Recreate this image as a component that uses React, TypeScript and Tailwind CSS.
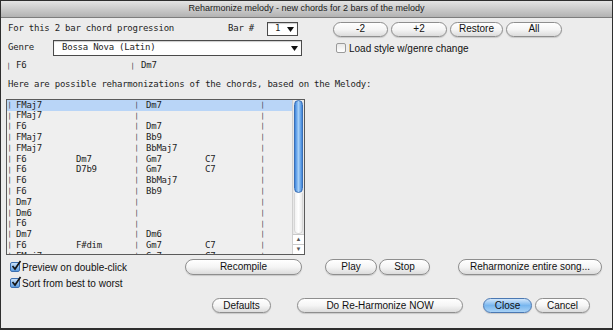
const mono = "font-['DejaVu_Sans_Mono',monospace] text-[9px] tracking-[-0.23px] text-[#1e1e1e]";
const sans = "font-['Liberation_Sans',Arial,sans-serif]";

const rows: [string, string, string, string][] = [
  ['FMaj7', '', 'Dm7', ''],
  ['FMaj7', '', '', ''],
  ['F6', '', 'Dm7', ''],
  ['FMaj7', '', 'Bb9', ''],
  ['FMaj7', '', 'BbMaj7', ''],
  ['F6', 'Dm7', 'Gm7', 'C7'],
  ['F6', 'D7b9', 'Gm7', 'C7'],
  ['F6', '', 'BbMaj7', ''],
  ['F6', '', 'Bb9', ''],
  ['Dm7', '', '', ''],
  ['Dm6', '', '', ''],
  ['F6', '', '', ''],
  ['Dm7', '', 'Dm6', ''],
  ['F6', 'F#dim', 'Gm7', 'C7'],
  ['FMaj7', '', 'Gm7', 'C7'],
];

function Bar() {
  return (
    <span className="w-[5px] shrink-0 text-center font-['DejaVu_Sans_Mono',monospace] text-[7px] leading-none text-[#3a3a3a]">
      |
    </span>
  );
}

function Button({
  label,
  className = '',
  primary = false,
}: {
  label: string;
  className?: string;
  primary?: boolean;
}) {
  return (
    <div
      className={`flex items-center justify-center shrink-0 rounded-full border text-[10px] leading-none text-[#111] ${sans} ${
        primary
          ? 'border-[#4b78b2] bg-gradient-to-b from-[#d2e7fb] via-[#78b6ee] to-[#a8d2f6]'
          : 'border-[#8e8e8e] bg-gradient-to-b from-white via-[#f5f5f5] to-[#dcdcdc]'
      } shadow-[0_1px_1px_rgba(0,0,0,0.15)] ${className}`}
    >
      {label}
    </div>
  );
}

function Triangle() {
  return (
    <svg width="7" height="5" viewBox="0 0 7 5" className="shrink-0">
      <path d="M0 0 L7 0 L3.5 5 Z" fill="#111" />
    </svg>
  );
}

function Select({ value, className = '', pad = '' }: { value: string; className?: string; pad?: string }) {
  return (
    <div
      className={`flex items-center shrink-0 bg-white border border-[#4a4a4a] shadow-[inset_0_1px_1px_rgba(0,0,0,0.2)] ${className}`}
    >
      <span className={`${mono} flex-1 ${pad}`}>{value}</span>
      <span className="pr-[3px]">
        <Triangle />
      </span>
    </div>
  );
}

function Checkbox({ checked }: { checked: boolean }) {
  if (!checked)
    return (
      <span className="w-[10px] h-[10px] shrink-0 rounded-[2px] border border-[#9a9a9a] bg-gradient-to-b from-[#e8e8e8] to-white" />
    );
  return (
    <span className="relative w-[10px] h-[10px] shrink-0 rounded-[2px] border border-[#3d6fb0] bg-gradient-to-b from-[#c8e1fa] to-[#5d9de0]">
      <svg width="11" height="11" viewBox="0 0 11 11" className="absolute -top-[3px] left-[0px]">
        <path d="M1.5 6 L4 9 L9.5 1" fill="none" stroke="#151515" strokeWidth="1.7" />
      </svg>
    </span>
  );
}

export default function App() {
  return (
    <div className={`w-[613px] h-[330px] flex flex-col bg-[#ececec] border border-b-2 border-[#2e2e2e] ${sans}`}>
      {/* Title bar */}
      <div className="h-[17px] shrink-0 flex items-center justify-center border-b border-[#7d7d7d] bg-gradient-to-b from-[#e4e4e4] to-[#b2b2b2] text-[9px] text-[#1c1c1c]">
        Reharmonize melody - new chords for 2 bars of the melody
      </div>

      {/* Bar # and transpose buttons */}
      <div className="mt-[3px] h-[16px] flex items-center pl-[7px]">
        <span className={`${mono} w-[220px] shrink-0`}>For this 2 bar chord progression</span>
        <span className={`${mono} w-[39px] shrink-0`}>Bar #</span>
        <Select value="1" className="w-[31px] h-[14px]" pad="pl-[7px]" />
        <div className="ml-[35px] flex gap-[3px]">
          <Button label="-2" className="w-[55px] h-[15px]" />
          <Button label="+2" className="w-[56px] h-[15px]" />
          <Button label="Restore" className="w-[53px] h-[15px]" />
          <Button label="All" className="w-[56px] h-[15px]" />
        </div>
      </div>

      {/* Genre */}
      <div className="mt-[3px] h-[16px] flex items-center pl-[7px]">
        <span className={`${mono} w-[45px] shrink-0`}>Genre</span>
        <Select value="Bossa Nova (Latin)" className="w-[249px] h-[16px]" pad="pl-[8px]" />
        <span className="ml-[34px] flex items-center">
          <Checkbox checked={false} />
        </span>
        <span className="ml-[3px] text-[10px] text-[#111]">Load style w/genre change</span>
      </div>

      {/* Current chords */}
      <div className={`mt-[2px] h-[16px] flex items-center pl-[5px] ${mono}`}>
        <Bar />
        <span className="ml-[5px] w-[114px]">F6</span>
        <Bar />
        <span className="ml-[6px]">Dm7</span>
      </div>

      <div className={`mt-[3px] h-[16px] flex items-center pl-[7px] ${mono}`}>
        Here are possible reharmonizations of the chords, based on the Melody:
      </div>

      {/* List of reharmonizations */}
      <div className="mt-[6px] ml-[5px] w-[299px] h-[156px] shrink-0 flex border border-[#5a5a5a] bg-[#efefef] overflow-hidden">
        <div className="flex-1 flex flex-col">
          {rows.map(([a, b, c, d], i) => (
            <div
              key={i}
              className={`h-[10.8px] shrink-0 flex items-center ${mono} ${i === 0 ? 'bg-[#b9d5f7]' : ''}`}
            >
              <Bar />
              <span className="ml-[4px] w-[60px] shrink-0">{a}</span>
              <span className="w-[58px] shrink-0">{b}</span>
              <Bar />
              <span className="ml-[7px] w-[59px] shrink-0">{c}</span>
              <span className="w-[55px] shrink-0">{d}</span>
              <Bar />
            </div>
          ))}
        </div>
        {/* Scrollbar */}
        <div className="w-[12px] shrink-0 flex flex-col bg-gradient-to-r from-[#e6e6e6] via-[#fafafa] to-[#e6e6e6] border-l border-[#cfcfcf]">
          <div className="mx-[1px] h-[93px] shrink-0 rounded-full border border-[#3a6fb5] bg-gradient-to-r from-[#3d86de] via-[#a6d0f7] to-[#3f87dc]" />
          <div className="flex-1 mx-[1px] rounded-b-full border border-t-0 border-[#d6d6d6] bg-gradient-to-r from-[#f2f2f2] via-white to-[#ececec]" />
          <div className="h-[10px] shrink-0 flex items-center justify-center border-t border-[#c9c9c9] bg-white text-[6px] text-[#555]">
            ▲
          </div>
          <div className="h-[10px] shrink-0 flex items-center justify-center border-t border-[#c9c9c9] bg-white text-[6px] text-[#555]">
            ▼
          </div>
        </div>
      </div>

      {/* Options and actions */}
      <div className="mt-[4px] h-[16px] flex items-center pl-[7px]">
        <div className="w-[177px] shrink-0 flex items-center">
          <span className="ml-[2px] flex items-center">
            <Checkbox checked />
          </span>
          <span className="ml-[2px] text-[10px] text-[#111]">Preview on double-click</span>
        </div>
        <Button label="Recompile" className="w-[117px] h-[16px]" />
        <Button label="Play" className="ml-[23px] w-[52px] h-[16px]" />
        <Button label="Stop" className="ml-[2px] w-[51px] h-[16px]" />
        <Button label="Reharmonize entire song..." className="ml-[28px] w-[144px] h-[16px]" />
      </div>

      <div className="mt-[1px] h-[14px] flex items-center pl-[7px]">
        <span className="ml-[2px] flex items-center">
          <Checkbox checked />
        </span>
        <span className="ml-[2px] text-[10px] text-[#111]">Sort from best to worst</span>
      </div>

      <div className="mt-[8px] h-[15px] flex items-center pl-[211px]">
        <Button label="Defaults" className="w-[59px] h-[15px]" />
        <Button label="Do Re-Harmonize NOW" className="ml-[26px] w-[166px] h-[15px]" />
        <Button label="Close" primary className="ml-[20px] w-[49px] h-[15px]" />
        <Button label="Cancel" className="ml-[3px] w-[55px] h-[15px]" />
      </div>
    </div>
  );
}
